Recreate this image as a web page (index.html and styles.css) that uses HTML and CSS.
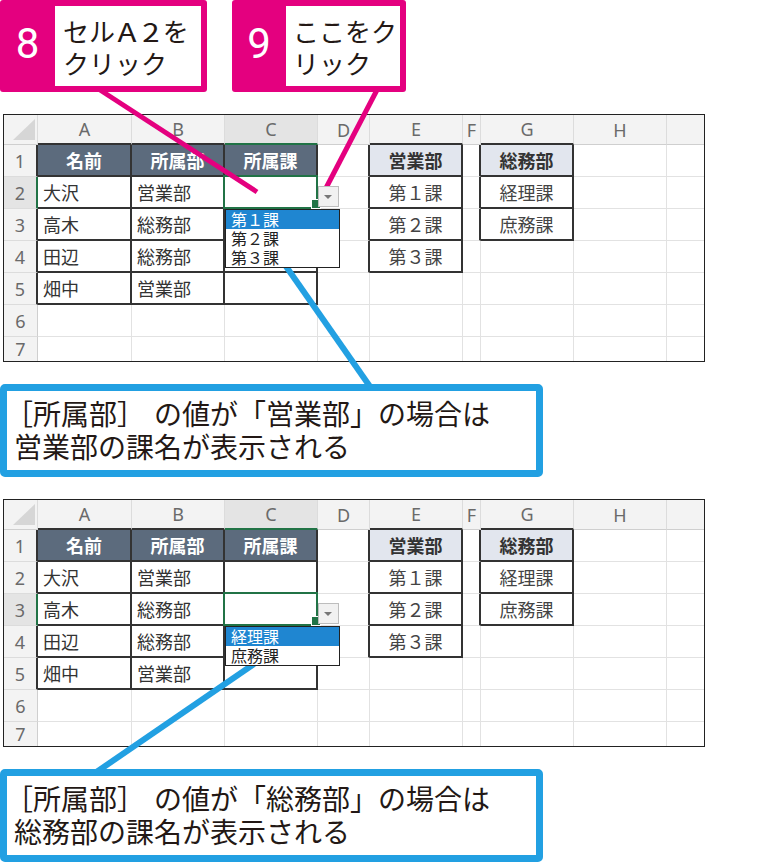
FILE: index.html
```html
<!DOCTYPE html>
<html lang="ja">
<head>
<meta charset="utf-8">
<title>入力規則</title>
<link rel="stylesheet" href="styles.css">
</head>
<body>
<div class="page">
  <div class="tops">
    <div class="tag tag8">
      <div class="num">8</div>
      <div class="txt">セル<span class="hw">A</span><span class="hw">2</span>を<br>クリック</div>
    </div>
    <div class="tag tag9">
      <div class="num">9</div>
      <div class="txt">ここをク<br>リック</div>
    </div>
  </div>

  <div class="sheet">
    <div class="c ch tl"><svg width="22" height="21" viewBox="0 0 22 21"><polygon points="22,0 22,21 0,21" fill="#d6d6d6"/></svg></div>
    <div class="c ch bB">A</div>
    <div class="c ch bB">B</div>
    <div class="c ch selc">C</div>
    <div class="c ch">D</div>
    <div class="c ch bB">E</div>
    <div class="c ch">F</div>
    <div class="c ch bB">G</div>
    <div class="c ch">H</div>
    <div class="c ch last"></div>

    <div class="c rh bR">1</div>
    <div class="c hd bR bB">名前</div>
    <div class="c hd bR bB">所属部</div>
    <div class="c hd bR bB">所属課</div>
    <div class="c bR"></div>
    <div class="c hl bR bB">営業部</div>
    <div class="c bR"></div>
    <div class="c hl bR bB">総務部</div>
    <div class="c"></div>
    <div class="c last"></div>

    <div class="c rh bR selr">2</div>
    <div class="c tx bR bB">大沢</div>
    <div class="c tx bR bB">営業部</div>
    <div class="c bR bB sel">
      <span class="ddbtn"></span>
      <div class="ddlist">
        <div class="ddi on">第１課</div>
        <div class="ddi">第２課</div>
        <div class="ddi">第３課</div>
      </div>
    </div>
    <div class="c bR"></div>
    <div class="c ct bR bB">第１課</div>
    <div class="c bR"></div>
    <div class="c ct bR bB">経理課</div>
    <div class="c"></div>
    <div class="c last"></div>

    <div class="c rh bR">3</div>
    <div class="c tx bR bB">高木</div>
    <div class="c tx bR bB">総務部</div>
    <div class="c bR bB"></div>
    <div class="c bR"></div>
    <div class="c ct bR bB">第２課</div>
    <div class="c bR"></div>
    <div class="c ct bR bB">庶務課</div>
    <div class="c"></div>
    <div class="c last"></div>

    <div class="c rh bR">4</div>
    <div class="c tx bR bB">田辺</div>
    <div class="c tx bR bB">総務部</div>
    <div class="c bR bB"></div>
    <div class="c bR"></div>
    <div class="c ct bR bB">第３課</div>
    <div class="c"></div>
    <div class="c"></div>
    <div class="c"></div>
    <div class="c last"></div>

    <div class="c rh bR">5</div>
    <div class="c tx bR bB">畑中</div>
    <div class="c tx bR bB">営業部</div>
    <div class="c bR bB"></div>
    <div class="c"></div>
    <div class="c"></div>
    <div class="c"></div>
    <div class="c"></div>
    <div class="c"></div>
    <div class="c last"></div>

    <div class="c rh">6</div>
    <div class="c"></div><div class="c"></div><div class="c"></div><div class="c"></div><div class="c"></div><div class="c"></div><div class="c"></div><div class="c"></div><div class="c last"></div>

    <div class="c rh lr">7</div>
    <div class="c lr"></div><div class="c lr"></div><div class="c lr"></div><div class="c lr"></div><div class="c lr"></div><div class="c lr"></div><div class="c lr"></div><div class="c lr"></div><div class="c lr last"></div>
  </div>

  <div class="note"><span class="ob">［</span>所属部<span class="cb">］</span>の値が「営業部」の場合は<br>営業部の課名が表示される</div>

  <div class="sheet">
    <div class="c ch tl"><svg width="22" height="21" viewBox="0 0 22 21"><polygon points="22,0 22,21 0,21" fill="#d6d6d6"/></svg></div>
    <div class="c ch bB">A</div>
    <div class="c ch bB">B</div>
    <div class="c ch selc">C</div>
    <div class="c ch">D</div>
    <div class="c ch bB">E</div>
    <div class="c ch">F</div>
    <div class="c ch bB">G</div>
    <div class="c ch">H</div>
    <div class="c ch last"></div>

    <div class="c rh bR">1</div>
    <div class="c hd bR bB">名前</div>
    <div class="c hd bR bB">所属部</div>
    <div class="c hd bR bB">所属課</div>
    <div class="c bR"></div>
    <div class="c hl bR bB">営業部</div>
    <div class="c bR"></div>
    <div class="c hl bR bB">総務部</div>
    <div class="c"></div>
    <div class="c last"></div>

    <div class="c rh bR">2</div>
    <div class="c tx bR bB">大沢</div>
    <div class="c tx bR bB">営業部</div>
    <div class="c bR bB"></div>
    <div class="c bR"></div>
    <div class="c ct bR bB">第１課</div>
    <div class="c bR"></div>
    <div class="c ct bR bB">経理課</div>
    <div class="c"></div>
    <div class="c last"></div>

    <div class="c rh bR selr">3</div>
    <div class="c tx bR bB">高木</div>
    <div class="c tx bR bB">総務部</div>
    <div class="c bR bB sel">
      <span class="ddbtn"></span>
      <div class="ddlist">
        <div class="ddi on">経理課</div>
        <div class="ddi">庶務課</div>
      </div>
    </div>
    <div class="c bR"></div>
    <div class="c ct bR bB">第２課</div>
    <div class="c bR"></div>
    <div class="c ct bR bB">庶務課</div>
    <div class="c"></div>
    <div class="c last"></div>

    <div class="c rh bR">4</div>
    <div class="c tx bR bB">田辺</div>
    <div class="c tx bR bB">総務部</div>
    <div class="c bR bB"></div>
    <div class="c bR"></div>
    <div class="c ct bR bB">第３課</div>
    <div class="c"></div>
    <div class="c"></div>
    <div class="c"></div>
    <div class="c last"></div>

    <div class="c rh bR">5</div>
    <div class="c tx bR bB">畑中</div>
    <div class="c tx bR bB">営業部</div>
    <div class="c bR bB"></div>
    <div class="c"></div>
    <div class="c"></div>
    <div class="c"></div>
    <div class="c"></div>
    <div class="c"></div>
    <div class="c last"></div>

    <div class="c rh">6</div>
    <div class="c"></div><div class="c"></div><div class="c"></div><div class="c"></div><div class="c"></div><div class="c"></div><div class="c"></div><div class="c"></div><div class="c last"></div>

    <div class="c rh lr">7</div>
    <div class="c lr"></div><div class="c lr"></div><div class="c lr"></div><div class="c lr"></div><div class="c lr"></div><div class="c lr"></div><div class="c lr"></div><div class="c lr"></div><div class="c lr last"></div>
  </div>

  <div class="note"><span class="ob">［</span>所属部<span class="cb">］</span>の値が「総務部」の場合は<br>総務部の課名が表示される</div>
</div>

<svg class="marks" width="783" height="862" viewBox="0 0 783 862">
  <line x1="97" y1="88" x2="257" y2="192" stroke="#e4007f" stroke-width="5"/>
  <line x1="378" y1="88" x2="326" y2="188" stroke="#e4007f" stroke-width="5"/>
  <line x1="283" y1="262" x2="371" y2="388" stroke="#22a0e2" stroke-width="6"/>
  <line x1="254" y1="664" x2="95" y2="773" stroke="#22a0e2" stroke-width="6"/>
</svg>
</body>
</html>
```

FILE: styles.css
```css
* { box-sizing: border-box; }

body {
  margin: 0;
  width: 783px;
  height: 862px;
  overflow: hidden;
  background: #fff;
  color: #231815;
  font-family: "Noto Sans CJK JP", "Noto Sans", sans-serif;
}

.page {
  display: flex;
  flex-direction: column;
  align-items: flex-start;
}

/* step callouts */
.tops {
  display: flex;
  gap: 25px;
  height: 92px;
}

.tag {
  display: flex;
  background: #e4007f;
  padding: 6px 6px 6px 0;
  border-radius: 3px;
}

.tag .num {
  display: flex;
  align-items: center;
  justify-content: center;
  color: #fff;
  font-family: Roboto, "Noto Sans", sans-serif;
  font-size: 42px;
  line-height: 1;
  padding-bottom: 4px;
}

.tag .txt {
  background: #fff;
  padding: 9px 0 0 8px;
  font-size: 26px;
  line-height: 32px;
  color: #231815;
  white-space: nowrap;
}

.tag8 { width: 207px; }
.tag8 .num { width: 55px; }
.tag8 .txt { width: 146px; }

.tag9 { width: 174px; }
.tag9 .num { width: 54px; }
.tag9 .txt { width: 114px; padding-left: 7px; }

.hw {
  display: inline-block;
  width: 0.92em;
  text-align: center;
  transform: scaleX(1.2);
}

/* spreadsheet */
.sheet {
  margin: 22px 0 0 3px;
  width: 702px;
  height: 248px;
  border: 1px solid #222;
  display: grid;
  grid-template-columns: 34px 94px 93px 93px 52px 93px 18px 93px 93px 37px;
  grid-template-rows: 30px repeat(6, 32px) 24px;
  background: #fff;
}

.c {
  border-right: 1px solid #e2e2e2;
  border-bottom: 1px solid #e2e2e2;
  display: flex;
  align-items: center;
  font-size: 18px;
  color: #333;
  white-space: nowrap;
  min-width: 0;
}

.ch {
  background: #f3f3f3;
  justify-content: center;
  font-family: "Noto Sans", "Liberation Sans", sans-serif;
  font-size: 18px;
  color: #6a6a6a;
  border-right: 1px solid #dcdcdc;
  border-bottom: 1px solid #cfcfcf;
}

.tl {
  align-items: flex-end;
  justify-content: flex-end;
  padding: 0 2px 4px 0;
}

.rh {
  background: #f3f3f3;
  justify-content: center;
  font-family: "Noto Sans", "Liberation Sans", sans-serif;
  font-size: 18px;
  color: #6a6a6a;
  border-right: 1px solid #cfcfcf;
  border-bottom: 1px solid #dcdcdc;
}

.tx { padding-left: 5px; }
.ct { justify-content: center; color: #444; }

.hd {
  background: #5c6b7d;
  color: #fff;
  font-weight: 700;
  justify-content: center;
}

.hl {
  background: #e2e6ee;
  color: #333;
  font-weight: 700;
  justify-content: center;
}

.last { border-right: none; }
.lr { border-bottom: none; }

.bR { border-right: 2px solid #333; }
.bB { border-bottom: 2px solid #333; }

.selc {
  background: #e4e4e4;
  border-bottom: 2px solid #217346;
}

.selr {
  background: #e4e4e4;
  border-right: 2px solid #217346;
}

/* selected cell with list */
.sel { position: relative; }

.sel::before {
  content: "";
  position: absolute;
  left: -2px;
  top: -2px;
  right: -2px;
  bottom: -2px;
  border: 2px solid #217346;
}

.sel::after {
  content: "";
  position: absolute;
  right: -5px;
  bottom: -2px;
  width: 8px;
  height: 8px;
  background: #217346;
  border: 1px solid #fff;
}

.ddbtn {
  position: absolute;
  left: calc(100% + 2px);
  top: 9px;
  width: 21px;
  height: 21px;
  background: #f1f1f1;
  border: 1px solid #bdbdbd;
  z-index: 2;
}

.ddbtn::after {
  content: "";
  position: absolute;
  left: 5px;
  top: 8px;
  border-left: 4px solid transparent;
  border-right: 4px solid transparent;
  border-top: 4px solid #777;
}

.ddlist {
  position: absolute;
  left: 0;
  top: 32px;
  width: 115px;
  background: #fff;
  border: 1px solid #222;
  z-index: 3;
}

.ddi {
  height: 19px;
  line-height: 19px;
  font-size: 16px;
  padding-left: 5px;
  color: #222;
}

.ddi.on {
  background: #1f86d1;
  color: #fff;
}

/* explanation boxes */
.note {
  margin-top: 22px;
  width: 543px;
  height: 93px;
  border: 7px solid #22a0e2;
  border-radius: 5px;
  padding: 6px 0 0 7px;
  font-size: 28px;
  line-height: 33px;
  color: #231815;
  white-space: nowrap;
  background: #fff;
}

.note .ob { margin-left: -9px; }
.note .cb { margin-right: 9px; }

/* leader lines drawn over the page */
.marks {
  position: absolute;
  left: 0;
  top: 0;
  pointer-events: none;
}
```
